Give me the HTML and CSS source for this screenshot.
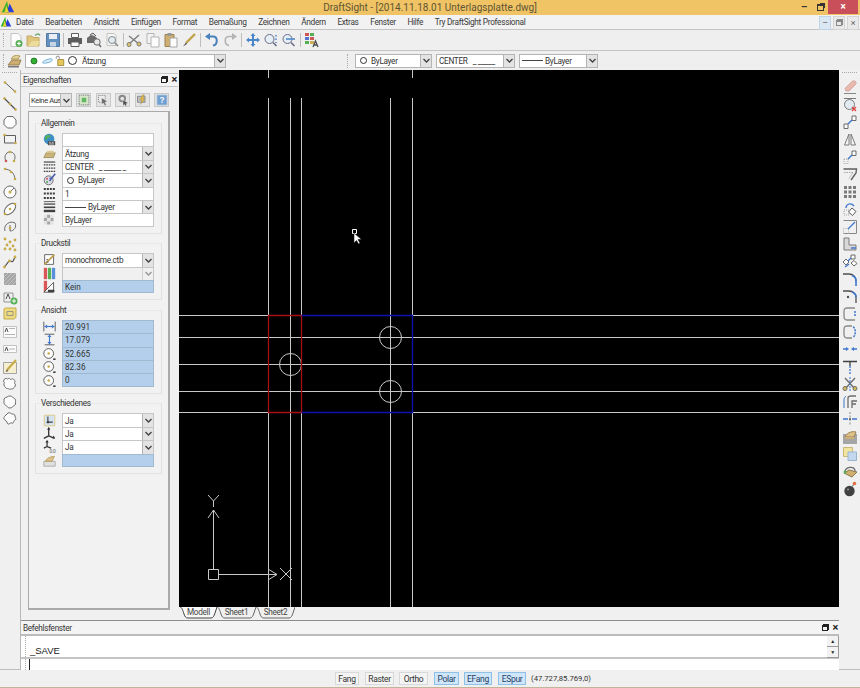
FILE: index.html
```html
<!DOCTYPE html>
<html lang="de">
<head>
  <meta charset="UTF-8">
  <title>DraftSight</title>
  <link rel="stylesheet" href="styles.css">
</head>
<body>
  <svg class="defs" xmlns="http://www.w3.org/2000/svg">
    <!-- small parts -->
    <symbol id="chev" viewBox="0 0 9 9"><path d="M1.5 3 4.5 6 7.5 3" fill="none" stroke="#444" stroke-width="1.4"/></symbol>
    <!-- main toolbar -->
    <symbol id="new" viewBox="0 0 16 16"><path d="M3 1.5h7l3 3v10H3z" fill="#fff" stroke="#bbb"/><circle cx="11" cy="11.5" r="3.5" fill="#3ca53c"/><path d="M11 9.5v4M9 11.5h4" stroke="#fff" stroke-width="1.2"/></symbol>
    <symbol id="open" viewBox="0 0 16 16"><path d="M1 4h5l1 1.5h6V14H1z" fill="#dcc06a" stroke="#b89c50"/><path d="M9 3.5c2-2 4-2 5 0" fill="none" stroke="#5aa25a" stroke-width="1.5"/><path d="M6 9h8l-2 5H2z" fill="#ecd98e"/></symbol>
    <symbol id="save" viewBox="0 0 16 16"><path d="M1.5 1.5h13v13h-13z" fill="#4a80b8" stroke="#3a6796"/><path d="M4 2h8v5H4z" fill="#e8eef5"/><path d="M5 10h6v4.5H5z" fill="#bcd0e4"/></symbol>
    <symbol id="print" viewBox="0 0 16 16"><path d="M4.5 1.5h7v4h-7z" fill="#fff" stroke="#444"/><path d="M1 6h14v6H1z" fill="#444"/><path d="M4 10h8v4.5H4z" fill="#fff" stroke="#444"/></symbol>
    <symbol id="plot" viewBox="0 0 16 16"><path d="M1 6l5-4 5 4v5H1z" fill="#555"/><path d="M4 3l3-2 3 3" fill="#ddd" stroke="#444"/><circle cx="11" cy="10" r="3.2" fill="#e8e8e8" stroke="#555"/><path d="M13 12.5l2 2.5" stroke="#555" stroke-width="1.5"/></symbol>
    <symbol id="preview" viewBox="0 0 16 16"><path d="M3 1.5h7l2 2v10H3z" fill="#f7f7f7" stroke="#bbb"/><circle cx="8" cy="8" r="3.5" fill="#e4ecf2" stroke="#777"/><path d="M10.5 10.5l3.5 3.5" stroke="#777" stroke-width="1.5"/></symbol>
    <symbol id="cut" viewBox="0 0 16 16"><path d="M2 13 13 3M3 4l10 8" stroke="#666" stroke-width="1.3"/><circle cx="3" cy="12.5" r="2" fill="#e0c050" stroke="#666"/><circle cx="13" cy="12" r="2" fill="#e0c050" stroke="#666"/></symbol>
    <symbol id="copy" viewBox="0 0 16 16"><path d="M2 1.5h7v10H2z" fill="#f4f4f4" stroke="#aaa"/><path d="M6 5h8v10H6z" fill="#fff" stroke="#aaa"/></symbol>
    <symbol id="paste" viewBox="0 0 16 16"><path d="M2 2.5h9v12H2z" fill="#c9a35c" stroke="#8b6f3a"/><path d="M4.5 1h4v3h-4z" fill="#888"/><path d="M7 6h7v9H7z" fill="#fff" stroke="#999"/></symbol>
    <symbol id="brush" viewBox="0 0 16 16"><path d="M14 2 5 11" stroke="#b8962e" stroke-width="2.4"/><path d="M5 10.5 2 14.5l4-2.5z" fill="#333"/></symbol>
    <symbol id="undo" viewBox="0 0 16 16"><path d="M4 4.5h5c5 0 5 8 0 9" fill="none" stroke="#2d6fb4" stroke-width="2"/><path d="M1 4.5 6 1v7z" fill="#2d6fb4"/></symbol>
    <symbol id="redo" viewBox="0 0 16 16"><path d="M12 4.5H7c-5 0-5 8 0 9" fill="none" stroke="#aaa" stroke-width="1.6"/><path d="M15 4.5 10 1v7z" fill="#aaa"/></symbol>
    <symbol id="pan" viewBox="0 0 16 16"><path d="M8 1 5.5 4h5zM8 15l-2.5-3h5zM1 8l3-2.5v5zM15 8l-3-2.5v5z" fill="#2d74c4"/><path d="M8 3v10M3 8h10" stroke="#2d74c4" stroke-width="2"/></symbol>
    <symbol id="zoom1" viewBox="0 0 16 16"><circle cx="6.5" cy="7" r="4.5" fill="#e4f0f8" stroke="#557"/><path d="M10 10.5l3.5 3.5" stroke="#557" stroke-width="1.6"/><path d="M13 3v1.5M13 6.5V8M13 10v1" stroke="#2d74c4" stroke-width="1.5"/></symbol>
    <symbol id="zoom2" viewBox="0 0 16 16"><circle cx="6.5" cy="7" r="4.5" fill="#e4f0f8" stroke="#557"/><path d="M10 10.5l3.5 3.5" stroke="#557" stroke-width="1.6"/><path d="M5 7h9" stroke="#2d74c4" stroke-width="1.5"/></symbol>
    <symbol id="layers" viewBox="0 0 16 16"><path d="M1 1h4v3H1z" fill="#c83c3c"/><path d="M6 1h4v3H6z" fill="#3ca53c"/><path d="M1 5h4v3H1z" fill="#3c5ec8"/><path d="M6 5h4v3H6z" fill="#c83c3c"/><path d="M1 9h4v3H1z" fill="#3ca53c"/><path d="M6 9h4v3H6z" fill="#c8a53c"/><path d="M9 15l2.5-6 2.5 6M10 13h3" fill="none" stroke="#333" stroke-width="1.3"/></symbol>
    <symbol id="layer" viewBox="0 0 16 16"><path d="M1 12 5 7h9l-2 5z" fill="#c9a35c" stroke="#8b6f3a"/><path d="M4 6c2-4 6-4 9-3l-2 3z" fill="#e2cc8a" stroke="#a58a3c"/><path d="M1 13h11v1.5H1z" fill="#666"/></symbol>
    <!-- draw tools -->
    <symbol id="d-line" viewBox="0 0 16 16"><path d="M2.5 3 13.5 13" stroke="#444"/><circle cx="3" cy="3.5" r="1.3" fill="#c2a02c"/><circle cx="13" cy="12.5" r="1.3" fill="#c2a02c"/></symbol>
    <symbol id="d-poly" viewBox="0 0 16 16"><path d="M2 2 8 8l6 6" stroke="#333" stroke-width="1.2"/><circle cx="2.5" cy="2.5" r="1.3" fill="#c2a02c"/><circle cx="8" cy="8" r="1.3" fill="#c2a02c"/><circle cx="13.5" cy="13.5" r="1.3" fill="#c2a02c"/></symbol>
    <symbol id="d-hex" viewBox="0 0 16 16"><path d="M5 2.5h6L14 6v4.5L10.5 14h-5L2 10.5V6z" fill="#fff" stroke="#555"/></symbol>
    <symbol id="d-rect" viewBox="0 0 16 16"><path d="M2.5 4.5h11v7.5h-11z" fill="#f4f4f4" stroke="#444"/><circle cx="2.5" cy="4" r="1.3" fill="#c2a02c"/><circle cx="13.5" cy="12" r="1.3" fill="#c2a02c"/></symbol>
    <symbol id="d-arc" viewBox="0 0 16 16"><path d="M4 12C1 7 5 2 9 3c4 1 5 5 3 9" fill="none" stroke="#555"/><circle cx="4" cy="12" r="1.3" fill="#c83c3c"/><circle cx="8" cy="3" r="1.3" fill="#c2a02c"/><circle cx="12" cy="12" r="1.3" fill="#c2a02c"/></symbol>
    <symbol id="d-arc2" viewBox="0 0 16 16"><path d="M2 3c6 0 11 4 11 11" fill="none" stroke="#555"/><circle cx="3" cy="3" r="1.3" fill="#c2a02c"/><circle cx="9" cy="6" r="1.3" fill="#c2a02c"/><circle cx="13" cy="13" r="1.3" fill="#c2a02c"/></symbol>
    <symbol id="d-circle" viewBox="0 0 16 16"><circle cx="8" cy="8" r="6" fill="#fff" stroke="#555"/><path d="M8 8l4-4" stroke="#555"/><circle cx="8" cy="8" r="1.5" fill="#c2a02c"/></symbol>
    <symbol id="d-ell" viewBox="0 0 16 16"><ellipse cx="8" cy="8" rx="7" ry="4" transform="rotate(-45 8 8)" fill="#fff" stroke="#555"/><circle cx="3" cy="13" r="1.3" fill="#c2a02c"/><circle cx="8" cy="8" r="1.3" fill="#c2a02c"/><circle cx="13" cy="3" r="1.3" fill="#c2a02c"/></symbol>
    <symbol id="d-ell2" viewBox="0 0 16 16"><path d="M3 12C1 6 8 1 13 4c2 4-1 8-5 8" fill="none" stroke="#555"/><path d="M8 6v6" stroke="#555"/><circle cx="8" cy="9" r="1.3" fill="#c2a02c"/></symbol>
    <symbol id="d-dots" viewBox="0 0 16 16"><g fill="#c2a02c"><circle cx="3" cy="3" r="1.4"/><circle cx="8" cy="6" r="1.4"/><circle cx="13" cy="4" r="1.4"/><circle cx="5" cy="9" r="1.4"/><circle cx="11" cy="10" r="1.4"/><circle cx="3" cy="13" r="1.4"/><circle cx="8" cy="13" r="1.4"/><circle cx="13" cy="14" r="1.4"/></g></symbol>
    <symbol id="d-spline" viewBox="0 0 16 16"><path d="M2 13c3-1 3-6 6-6s2 3 5-4" fill="none" stroke="#333" stroke-width="1.2"/><circle cx="2.5" cy="13" r="1.4" fill="#c2a02c"/><circle cx="7.5" cy="7" r="1.4" fill="#c2a02c"/><circle cx="13" cy="3" r="1.4" fill="#c2a02c"/></symbol>
    <symbol id="d-hatch" viewBox="0 0 16 16"><path d="M2 2h12v12H2z" fill="#9a9a9a"/><path d="M2 6 6 2M2 10l8-8M2 14 14 2M6 14l8-8M10 14l4-4" stroke="#c4c4c4" stroke-width=".8"/></symbol>
    <symbol id="d-block" viewBox="0 0 16 16"><path d="M2 4h9v9H2z" fill="#eee" stroke="#888"/><path d="M4 10l2-5 2 5" fill="none" stroke="#333"/><circle cx="12" cy="12" r="3.5" fill="#3ca53c"/><path d="M12 10v4M10 12h4" stroke="#fff"/></symbol>
    <symbol id="d-note" viewBox="0 0 16 16"><path d="M2 4c0-2 1-2 2-2h10v8c0 2-1 3-3 3H2z" fill="#efd86a" stroke="#b8a030"/><path d="M5 5.5h6v4H5z" fill="none" stroke="#887"/></symbol>
    <symbol id="d-text" viewBox="0 0 16 16"><path d="M1.5 2.5h13v11h-13z" fill="#fdfdfd" stroke="#bbb"/><path d="M3 8l1.5-4L6 8" fill="none" stroke="#333"/><path d="M7 4.5h6M3 10.5h10" stroke="#aaa"/></symbol>
    <symbol id="d-text2" viewBox="0 0 16 16"><path d="M1.5 4.5h13v7h-13z" fill="#fdfdfd" stroke="#bbb"/><path d="M3 10l1.5-4L6 10" fill="none" stroke="#333"/><path d="M7 8h6" stroke="#aaa"/></symbol>
    <symbol id="d-edit" viewBox="0 0 16 16"><path d="M1.5 3.5h13v11h-13z" fill="#f8f0cc" stroke="#999"/><path d="M14 1 5 11" stroke="#c2a02c" stroke-width="2.2"/><path d="M5 10.5 3.5 13l3-1z" fill="#333"/></symbol>
    <symbol id="d-cloud" viewBox="0 0 16 16"><path d="M3 3c1-1.5 2 0 2.5 0s1.5-1.5 2.5 0 2-1 3 0 2 1 2 2-1 2 0 3 0 3-1 3.5-1 2-2 1.5-2 1-3 0-2 0-3-1-1.5-1.5-2-3 1-2 0-3 0-3 1.5-3.5z" fill="#fff" stroke="#555"/></symbol>
    <symbol id="d-oct" viewBox="0 0 16 16"><path d="M8 2c2 0 2 1 3 1.5s2 1 2.5 2.5-.5 1.5 0 3-1 2.5-2 3-1.5 2-3.5 2-2-1-3.5-2-2-1.5-2.5-3 .5-1.5 0-3S3.5 3.5 5 3s1-1 3-1z" fill="#fff" stroke="#555"/></symbol>
    <symbol id="d-star" viewBox="0 0 16 16"><path d="M6 2c2-1 3 1 4 1s3 0 3 2 2 3 0 4-1 4-3 3-3 2-4 1-1-3-3-4-1-3 0-4 2-2 3-3z" fill="#fff" stroke="#555"/></symbol>
    <!-- modify tools -->
    <symbol id="m-erase" viewBox="0 0 16 16"><path d="M3 9.5 10 2.5c1-1 3-.5 3.5 0s1 2 0 3L7 12H4z" fill="#e8b0a4" stroke="#d09a90"/><path d="M2 14.5h12" stroke="#777"/></symbol>
    <symbol id="m-trim" viewBox="0 0 16 16"><path d="M2 2.5h12" stroke="#666"/><circle cx="7.5" cy="8.5" r="5" fill="#dfeaf2" stroke="#666"/><path d="M10 11l4 4M14 11l-4 4" stroke="#d22" stroke-width="1.3"/></symbol>
    <symbol id="m-copy" viewBox="0 0 16 16"><path d="M2 10h4v4.5H2zM10 2h4v4.5h-4z" fill="#fff" stroke="#555"/><path d="M6 10l4-4" stroke="#1f62c8" stroke-width="1.5"/></symbol>
    <symbol id="m-mirror" viewBox="0 0 16 16"><path d="M7 3 2.5 14H7zM9 3l4.5 11H9z" fill="#f6f6f6" stroke="#666"/></symbol>
    <symbol id="m-move" viewBox="0 0 16 16"><path d="M2 10h4v4.5H2z" fill="none" stroke="#999" stroke-dasharray="1 1"/><path d="M10 2h4v4.5h-4z" fill="#fff" stroke="#555"/><path d="M6 10l4-4" stroke="#1f62c8" stroke-width="1.5"/></symbol>
    <symbol id="m-offset" viewBox="0 0 16 16"><path d="M1.5 3h13l-.5 4-5 7" fill="none" stroke="#444" stroke-width="1.3"/><path d="M2 6.5h9l-4 6" fill="none" stroke="#999" stroke-dasharray="1.5 1"/></symbol>
    <symbol id="m-array" viewBox="0 0 16 16"><path fill="#666" d="M2 2h3v3H2zM6.5 2h3v3h-3zM11 2h3v3h-3zM2 6.5h3v3H2zM6.5 6.5h3v3h-3zM11 6.5h3v3h-3zM2 11h3v3H2zM6.5 11h3v3h-3zM11 11h3v3h-3z"/></symbol>
    <symbol id="m-rotate" viewBox="0 0 16 16"><path d="M2 9h5v5H2z" fill="none" stroke="#999" stroke-dasharray="1 1"/><path d="M10 7l4 3.5-3.5 4-4-3.5z" fill="#fff" stroke="#444"/><path d="M4 7c0-4 5-6 8-2" fill="none" stroke="#1f62c8" stroke-width="1.3"/></symbol>
    <symbol id="m-scale" viewBox="0 0 16 16"><path d="M1.5 1.5h13v13h-13" fill="none" stroke="#777"/><path d="M1.5 14.5V9.5h5v5" fill="none" stroke="#aaa" stroke-dasharray="1 1"/><path d="M6 10l7-7" stroke="#1f62c8" stroke-width="1.2"/></symbol>
    <symbol id="m-stretch" viewBox="0 0 16 16"><path d="M2 2h5v7h7v5H2z" fill="#d4d4d4" stroke="#666"/><path d="M9 12h5" stroke="#1f62c8" stroke-width="1.5"/></symbol>
    <symbol id="m-explode" viewBox="0 0 16 16"><path d="M9 1h4v4H9zM1 8l3-3 3 3-3 3zM9 9l3-2.5 3 3-3 2.5z" fill="#fff" stroke="#555"/><path d="M3 13l4-3M6 7l3-3" stroke="#1f62c8" stroke-width="1.3"/></symbol>
    <symbol id="m-fillet" viewBox="0 0 16 16"><path d="M1 3h6c4 0 7 3 7 7" fill="none" stroke="#333" stroke-width="1.4"/><path d="M10 4.5c3 1 4 3 4 5.5v5" fill="none" stroke="#1f62c8" stroke-width="1.6"/></symbol>
    <symbol id="m-fillet2" viewBox="0 0 16 16"><path d="M1 2h6c4 0 7 3 7 6v6" fill="none" stroke="#333" stroke-width="1.3"/><circle cx="6" cy="8" r="1.2" fill="#333"/><path d="M10 3c3 1 4 3 4 5" fill="none" stroke="#1f62c8" stroke-width="1.6"/></symbol>
    <symbol id="m-chamf" viewBox="0 0 16 16"><path d="M13 2H5C2 2 2 4 2 6v4c0 3 1 4 3 4h8" fill="none" stroke="#777" stroke-width="1.3"/><path d="M13 5v6" stroke="#1f62c8" stroke-width="1.5" stroke-dasharray="2 1"/></symbol>
    <symbol id="m-chamf2" viewBox="0 0 16 16"><path d="M10 2H5C2 2 2 4 2 6v4c0 3 1 4 3 4h5" fill="none" stroke="#777" stroke-width="1.3"/><path d="M11 3c3 1 3 9 0 10" fill="none" stroke="#1f62c8" stroke-width="1.5" stroke-dasharray="2 1"/></symbol>
    <symbol id="m-join" viewBox="0 0 16 16"><path d="M1 8h4M11 8h4" stroke="#1f62c8" stroke-width="1.3"/><path d="M4 6l3 2-3 2zM12 6 9 8l3 2z" fill="#1f62c8"/></symbol>
    <symbol id="m-ext" viewBox="0 0 16 16"><path d="M1 2.5h14" stroke="#222" stroke-width="1.5"/><path d="M8 3v4" stroke="#222" stroke-width="1.3"/><path d="M8 7v8" stroke="#1f62c8" stroke-width="1.3" stroke-dasharray="2 1"/></symbol>
    <symbol id="m-cut" viewBox="0 0 16 16"><path d="M3 2 13 13M13 2 3 13" stroke="#555" stroke-width="1.3"/><circle cx="3" cy="12.5" r="2" fill="#d3b23c" stroke="#555"/><circle cx="13" cy="12.5" r="2" fill="#d3b23c" stroke="#555"/><path d="M8 1v14" stroke="#1f62c8" stroke-dasharray="2 1"/></symbol>
    <symbol id="m-break" viewBox="0 0 16 16"><path d="M6 14V4c0-1 1-2 3-2h5M10 14V7h5M10 10h4" fill="none" stroke="#555" stroke-width="1.3"/><path d="M2 14V6c0-2 1-3 2-4" fill="none" stroke="#1f62c8"/></symbol>
    <symbol id="m-split" viewBox="0 0 16 16"><path d="M1 8h5M10 8h5" stroke="#1f62c8" stroke-width="1.3"/><path d="M8 1v14" stroke="#777" stroke-dasharray="2 1.5"/><circle cx="8" cy="8" r="1" fill="#333"/></symbol>
    <symbol id="m-hatch" viewBox="0 0 16 16"><path d="M1 5h14v10H1z" fill="#999"/><path d="M3 8c2-5 8-6 11-5l-2 5z" fill="#dcb878" stroke="#8b6f3a"/><path d="M3 8h9v2H3z" fill="#c9a35c"/></symbol>
    <symbol id="m-order" viewBox="0 0 16 16"><path d="M1.5 1.5h9v9h-9z" fill="#f2e294" stroke="#c2b060"/><path d="M6 6h8.5v8.5H6z" fill="#bcd4ee" stroke="#8ba9c8"/></symbol>
    <symbol id="m-group" viewBox="0 0 16 16"><path d="M3 8C2 3 13 1 13 7" fill="none" stroke="#555" stroke-width="1.3"/><path d="M2 9l5-3 8 2-5 5z" fill="#cba658" stroke="#7a6334"/><circle cx="3" cy="8" r="1.5" fill="#3ca53c"/></symbol>
    <symbol id="m-bomb" viewBox="0 0 16 16"><circle cx="7.5" cy="10" r="5.2" fill="#222"/><circle cx="6" cy="8.5" r="1" fill="#888"/><path d="M10 6l2-3" stroke="#777" stroke-width="1.3"/><circle cx="12.5" cy="2.5" r="1.8" fill="#e05a22"/></symbol>
    <!-- property panel -->
    <symbol id="p-filter" viewBox="0 0 16 16"><path d="M1.5 1.5h13v13h-13z" fill="#d6e8c8" stroke="#444" stroke-dasharray="1.5 1"/><path d="M5 5h6v6H5z" fill="#4cb04c"/></symbol>
    <symbol id="p-select" viewBox="0 0 16 16"><path d="M2 2h9v9H2z" fill="#eee" stroke="#666" stroke-dasharray="1.5 1"/><path d="M6 5l8 5-3.5 1 2 3.5-2 1-2-3.5-2 2z" fill="#555" stroke="#fff" stroke-width=".5"/></symbol>
    <symbol id="p-quick" viewBox="0 0 16 16"><circle cx="7" cy="6" r="5" fill="#777"/><circle cx="7" cy="6" r="2.5" fill="#e4e4e4"/><path d="M8 8l7 4-3 1 1 2-2 1-1-2-2 1.5z" fill="#333" stroke="#fff" stroke-width=".5"/></symbol>
    <symbol id="p-bolt" viewBox="0 0 16 16"><path d="M2 3h10v8H2z" fill="#bbb" stroke="#666"/><path d="M9 1 5 8h3l-2 6 6-8H9l2-5z" fill="#e5b51e" stroke="#8b6f3a" stroke-width=".5"/></symbol>
    <symbol id="p-help" viewBox="0 0 16 16"><path d="M1.5 1.5h13v13h-13z" fill="#5c93d0" stroke="#8fb3da"/><text x="8" y="12.5" font-size="11" font-weight="700" text-anchor="middle" fill="#fff" font-family="Liberation Sans, sans-serif">?</text></symbol>
    <symbol id="p-globe" viewBox="0 0 16 16"><circle cx="7.5" cy="7.5" r="6.5" fill="#1f7fbf"/><path d="M3 4c2-2 5-2 6-1s-1 3-3 3-1 3-2 3-2-3-1-5z" fill="#3ca53c"/><path d="M6 10h9v5H6z" fill="#333"/><path d="M7.5 11.5h2M11 11.5h2M7.5 13.5h6" stroke="#ddd"/></symbol>
    <symbol id="p-layer" viewBox="0 0 16 16"><path d="M1 13 4 7h11l-2 6z" fill="#c2ab64" stroke="#8b7a3e"/><path d="M4 7l1.5-2.5h7L15 7z" fill="#d8c684"/></symbol>
    <symbol id="p-ltype" viewBox="0 0 16 16"><path d="M1 2.5h14" stroke="#222" stroke-width="1.4"/><path d="M1 6h14M1 10h14M1 14h14" stroke="#222" stroke-width="1.6" stroke-dasharray="2 1"/></symbol>
    <symbol id="p-color" viewBox="0 0 16 16"><circle cx="7" cy="9" r="5.5" fill="#d8d8e8" stroke="#444"/><circle cx="5" cy="7" r="1.3" fill="#c83c3c"/><circle cx="9" cy="6.5" r="1.3" fill="#3c5ec8"/><circle cx="5" cy="11" r="1.3" fill="#3ca53c"/><path d="M15 1 8 10" stroke="#27409c" stroke-width="2"/></symbol>
    <symbol id="p-scale" viewBox="0 0 16 16"><path d="M1 2.5h14M1 8h14M1 13.5h14" stroke="#222" stroke-width="2.4" stroke-dasharray="2.5 1.2"/></symbol>
    <symbol id="p-weight" viewBox="0 0 16 16"><path d="M1 2h14" stroke="#222"/><path d="M1 5h14" stroke="#222" stroke-width="1.5"/><path d="M1 9h14" stroke="#222" stroke-width="2"/><path d="M1 13.5h14" stroke="#222" stroke-width="3"/></symbol>
    <symbol id="p-trans" viewBox="0 0 16 16"><path d="M5 1h4v4H5zM1 5h4v4H1zM9 5h4v4H9zM5 9h4v4H5z" fill="#999"/><path d="M1 1h4v4H1zM9 1h4v4H9zM5 5h4v4H5zM1 9h4v4H1zM9 9h4v4H9z" fill="#e2e2e2"/></symbol>
    <symbol id="p-style" viewBox="0 0 16 16"><path d="M2 2h11v12H2z" fill="#fff" stroke="#333"/><path d="M2 14 14 2" stroke="#b98f2e" stroke-width="2"/><path d="M4 11h3M4 8h2" stroke="#333"/></symbol>
    <symbol id="p-rgb" viewBox="0 0 16 16"><path d="M1 1h4v14H1z" fill="#d83c3c"/><path d="M6 1h4v14H6z" fill="#3ca53c"/><path d="M11 1h4v14h-4z" fill="#3c7ed8"/></symbol>
    <symbol id="p-tbl" viewBox="0 0 16 16"><path d="M1 1h4v14H1z" fill="#d83c3c"/><path d="M1 15 13 3v12z" fill="#fff" stroke="#222"/><path d="M6 12h8v3H6z" fill="#222"/></symbol>
    <symbol id="p-w" viewBox="0 0 16 16"><path d="M1 2v12M15 2v12" stroke="#222"/><path d="M2 8h12" stroke="#1f62c8" stroke-width="1.4"/><path d="M2 8l3-2.5v5zM14 8l-3-2.5v5z" fill="#1f62c8"/></symbol>
    <symbol id="p-h" viewBox="0 0 16 16"><path d="M2 1.5h12M2 14.5h12" stroke="#222"/><path d="M8 2v12" stroke="#1f62c8" stroke-width="1.4"/><path d="M8 2 5.5 5h5zM8 14l-2.5-3h5z" fill="#1f62c8"/></symbol>
    <symbol id="p-cx" viewBox="0 0 16 16"><circle cx="7" cy="8" r="6" fill="#fff" stroke="#444" stroke-width="1.2"/><circle cx="7" cy="8" r="1.6" fill="#c2a02c"/><path d="M12.5 15h3" stroke="#222" stroke-width="2"/></symbol>
    <symbol id="p-ucs" viewBox="0 0 16 16"><path d="M1.5 1.5h13v13h-13z" fill="#cfe0f2" stroke="#d8c060"/><path d="M6 3v7h6" fill="none" stroke="#222" stroke-width="1.4"/><circle cx="6" cy="10" r="1.5" fill="#222"/></symbol>
    <symbol id="p-axes" viewBox="0 0 16 16"><path d="M7 1v10l7 3M7 11l-6 3" fill="none" stroke="#111" stroke-width="1.6"/><path d="M7 0 5 3.5h4zM15 14l-3.5-.5 1.5-3z" fill="#111"/></symbol>
    <symbol id="p-orig" viewBox="0 0 16 16"><path d="M5 1v7l5 2M5 8 1 10" fill="none" stroke="#111" stroke-width="1.5"/><path d="M5 0 3 3h4z" fill="#111"/><text x="8" y="15.5" font-size="6" fill="#333" font-family="Liberation Sans, sans-serif">0,0</text></symbol>
    <symbol id="p-view" viewBox="0 0 16 16"><path d="M1 9h14v6H1z" fill="#ddd" stroke="#999"/><path d="M3 9c1-4 7-6 11-6l-3 6z" fill="#dcb878" stroke="#a58a3c"/></symbol>
    <symbol id="s-green" viewBox="0 0 16 16"><circle cx="8" cy="8" r="4" fill="#2fae2f" stroke="#116611"/></symbol>
    <symbol id="s-freeze" viewBox="0 0 16 16"><path d="M2 10c0-2 8-5 11-5s2 3 0 4-11 3-11 1z" fill="#d7ebf8" stroke="#69a8d2" stroke-width="1.2"/></symbol>
    <symbol id="s-lock" viewBox="0 0 16 16"><path d="M3 5V3c0-2 4-2 4 0v2" fill="none" stroke="#777" stroke-width="1.2"/><path d="M5 6h8v8H5z" fill="#e5c65a" stroke="#94792a"/></symbol>
  </svg>

  <div class="app">
    <div class="title">
      <svg class="logo" viewBox="0 0 16 16"><path d="M1 14 7 1l2 13z" fill="#2fae2f"/><path d="M6 14 10 4l5 10z" fill="#2b3fd6"/><path d="M4 14 6 6l3 8z" fill="#e8d52c"/></svg>
      <span class="title-text">DraftSight - [2014.11.18.01 Unterlagsplatte.dwg]</span>
      <div class="win-btns">
        <span class="win-btn">&#8211;</span>
        <span class="win-btn"><i class="restore"></i></span>
        <span class="win-btn close">&#215;</span>
      </div>
    </div>

    <div class="menu">
      <svg class="logo small" viewBox="0 0 16 16"><path d="M1 14 7 1l2 13z" fill="#2fae2f"/><path d="M6 14 10 4l5 10z" fill="#2b3fd6"/><path d="M4 14 6 6l3 8z" fill="#e8d52c"/></svg>
      <span>Datei</span><span>Bearbeiten</span><span>Ansicht</span><span>Einfügen</span><span>Format</span><span>Bemaßung</span><span>Zeichnen</span><span>Ändern</span><span>Extras</span><span>Fenster</span><span>Hilfe</span><span>Try DraftSight Professional</span>
      <div class="mdi-btns">
        <span class="mdi blue">&#8211;</span>
        <span class="mdi"><i class="restore tiny"></i></span>
        <span class="mdi">&#215;</span>
      </div>
    </div>

    <div class="tools">
      <i class="grip"></i>
      <svg class="ico"><use href="#new"/></svg><svg class="ico"><use href="#open"/></svg><svg class="ico"><use href="#save"/></svg>
      <i class="sep"></i>
      <svg class="ico"><use href="#print"/></svg><svg class="ico"><use href="#plot"/></svg><svg class="ico"><use href="#preview"/></svg>
      <i class="sep"></i>
      <svg class="ico"><use href="#cut"/></svg><svg class="ico"><use href="#copy"/></svg><svg class="ico"><use href="#paste"/></svg><svg class="ico"><use href="#brush"/></svg>
      <i class="sep"></i>
      <svg class="ico"><use href="#undo"/></svg><svg class="ico"><use href="#redo"/></svg>
      <i class="sep"></i>
      <svg class="ico"><use href="#pan"/></svg><svg class="ico"><use href="#zoom1"/></svg><svg class="ico"><use href="#zoom2"/></svg>
      <i class="sep"></i>
      <svg class="ico"><use href="#layers"/></svg>
    </div>

    <div class="tools second">
      <div class="left-tools">
        <i class="grip"></i>
        <svg class="ico"><use href="#layer"/></svg>
        <div class="combo layer-combo">
          <span class="val">
            <svg class="mini"><use href="#s-green"/></svg><svg class="mini"><use href="#s-freeze"/></svg><svg class="mini"><use href="#s-lock"/></svg><i class="ring"></i>
            <span class="layer-name">Ätzung</span>
          </span>
          <span class="arrow"><svg><use href="#chev"/></svg></span>
        </div>
      </div>
      <div class="right-tools">
        <i class="grip"></i>
        <div class="combo c-color"><span class="val"><i class="ring small-ring"></i>ByLayer</span><span class="arrow"><svg><use href="#chev"/></svg></span></div>
        <div class="combo c-ltype"><span class="val">CENTER&nbsp;&nbsp;&nbsp;_&nbsp;_____</span><span class="arrow"><svg><use href="#chev"/></svg></span></div>
        <div class="combo c-weight"><span class="val"><i class="lw"></i>ByLayer</span><span class="arrow"><svg><use href="#chev"/></svg></span></div>
      </div>
    </div>

    <div class="main">
      <div class="side-bar">
        <i class="bar-grip"></i>
        <svg class="ico"><use href="#d-line"/></svg>
        <svg class="ico"><use href="#d-poly"/></svg>
        <svg class="ico"><use href="#d-hex"/></svg>
        <svg class="ico"><use href="#d-rect"/></svg>
        <svg class="ico"><use href="#d-arc"/></svg>
        <svg class="ico"><use href="#d-arc2"/></svg>
        <svg class="ico"><use href="#d-circle"/></svg>
        <svg class="ico"><use href="#d-ell"/></svg>
        <svg class="ico"><use href="#d-ell2"/></svg>
        <svg class="ico"><use href="#d-dots"/></svg>
        <svg class="ico"><use href="#d-spline"/></svg>
        <svg class="ico"><use href="#d-hatch"/></svg>
        <svg class="ico"><use href="#d-block"/></svg>
        <svg class="ico"><use href="#d-note"/></svg>
        <svg class="ico"><use href="#d-text"/></svg>
        <svg class="ico"><use href="#d-text2"/></svg>
        <svg class="ico"><use href="#d-edit"/></svg>
        <svg class="ico"><use href="#d-cloud"/></svg>
        <svg class="ico"><use href="#d-oct"/></svg>
        <svg class="ico"><use href="#d-star"/></svg>
      </div>

      <div class="panel">
        <div class="dock-head">
          <span>Eigenschaften</span>
          <span class="dock-btns"><i class="restore tiny dark"></i><b>&#215;</b></span>
        </div>
        <div class="panel-tools">
          <div class="combo filter-combo"><span class="val">Keine Aus</span><span class="arrow"><svg><use href="#chev"/></svg></span></div>
          <span class="pbtn"><svg class="ico"><use href="#p-filter"/></svg></span>
          <span class="pbtn"><svg class="ico"><use href="#p-select"/></svg></span>
          <span class="pbtn"><svg class="ico"><use href="#p-quick"/></svg></span>
          <span class="pbtn"><svg class="ico"><use href="#p-bolt"/></svg></span>
          <span class="pbtn"><svg class="ico"><use href="#p-help"/></svg></span>
        </div>
        <div class="panel-frame">
          <section class="group">
            <h3>Allgemein</h3>
            <div class="row"><svg class="ico"><use href="#p-globe"/></svg><div class="field"></div></div>
            <div class="row"><svg class="ico"><use href="#p-layer"/></svg><div class="field drop">Ätzung<span class="arrow"><svg><use href="#chev"/></svg></span></div></div>
            <div class="row"><svg class="ico"><use href="#p-ltype"/></svg><div class="field drop">CENTER&nbsp;&nbsp;&nbsp;_&nbsp;_____&nbsp;_<span class="arrow"><svg><use href="#chev"/></svg></span></div></div>
            <div class="row"><svg class="ico"><use href="#p-color"/></svg><div class="field drop"><i class="ring small-ring"></i>ByLayer<span class="arrow"><svg><use href="#chev"/></svg></span></div></div>
            <div class="row"><svg class="ico"><use href="#p-scale"/></svg><div class="field">1</div></div>
            <div class="row"><svg class="ico"><use href="#p-weight"/></svg><div class="field drop"><i class="lw"></i>ByLayer<span class="arrow"><svg><use href="#chev"/></svg></span></div></div>
            <div class="row"><svg class="ico"><use href="#p-trans"/></svg><div class="field">ByLayer</div></div>
          </section>
          <section class="group">
            <h3>Druckstil</h3>
            <div class="row"><svg class="ico"><use href="#p-style"/></svg><div class="field drop">monochrome.ctb<span class="arrow"><svg><use href="#chev"/></svg></span></div></div>
            <div class="row"><svg class="ico"><use href="#p-rgb"/></svg><div class="field drop off"><span class="arrow"><svg><use href="#chev"/></svg></span></div></div>
            <div class="row"><svg class="ico"><use href="#p-tbl"/></svg><div class="field ro">Kein</div></div>
          </section>
          <section class="group">
            <h3>Ansicht</h3>
            <div class="row"><svg class="ico"><use href="#p-w"/></svg><div class="field ro">20.991</div></div>
            <div class="row"><svg class="ico"><use href="#p-h"/></svg><div class="field ro">17.079</div></div>
            <div class="row"><svg class="ico"><use href="#p-cx"/></svg><div class="field ro">52.665</div></div>
            <div class="row"><svg class="ico"><use href="#p-cx"/></svg><div class="field ro">82.36</div></div>
            <div class="row"><svg class="ico"><use href="#p-cx"/></svg><div class="field ro">0</div></div>
          </section>
          <section class="group">
            <h3>Verschiedenes</h3>
            <div class="row"><svg class="ico"><use href="#p-ucs"/></svg><div class="field drop">Ja<span class="arrow"><svg><use href="#chev"/></svg></span></div></div>
            <div class="row"><svg class="ico"><use href="#p-axes"/></svg><div class="field drop">Ja<span class="arrow"><svg><use href="#chev"/></svg></span></div></div>
            <div class="row"><svg class="ico"><use href="#p-orig"/></svg><div class="field drop">Ja<span class="arrow"><svg><use href="#chev"/></svg></span></div></div>
            <div class="row"><svg class="ico"><use href="#p-view"/></svg><div class="field ro"></div></div>
          </section>
        </div>
      </div>

      <div class="drawing">
        <svg class="canvas" viewBox="179 70 660 537" xmlns="http://www.w3.org/2000/svg">
          <g class="cad">
            <path d="M268.5 70v8M412.5 70v8"/>
            <path d="M268.5 98V607M290.5 98V607M301.5 98V607M390.5 98V607M412.5 98V607"/>
            <path d="M179 315.5H839M179 337.5H839M179 364.5H839M179 391.5H839M179 412.5H839"/>
            <circle cx="290.5" cy="364.5" r="11"/>
            <circle cx="390.5" cy="337.5" r="11"/>
            <circle cx="390.5" cy="391.5" r="11"/>
          </g>
          <path class="red" d="M301.5 315.5H268.5V412.5H301.5Z"/>
          <path class="blue" d="M301.5 315.5H412.5V412.5H301.5"/>
          <g class="ucs">
            <path d="M208.5 569.5h10v10h-10z"/>
            <path d="M213.5 569V510M208 518l5.5-8 5.5 8"/>
            <path d="M218.5 574.5H277M268 569l9 5.5-9 5.5"/>
            <path d="M280 568l12 12M292 568l-12 12"/>
            <path d="M208 495l5.5 6 5.5-6M213.5 501v6"/>
          </g>
          <path class="pick" d="M352.5 229.5h4v4h-4z"/>
          <path class="cursor" d="M354 233v10l2.5-2.5 2 3.5 1.5-1-2-3.5h3.5z"/>
        </svg>
        <div class="tabs">
          <div class="tab active"><svg width="37" height="12"><path d="M0 0c2 0 3 4 4 7s2 4 4 4h23c2 0 3-2 4-5l2-6"/></svg><span>Modell</span></div>
          <div class="tab"><svg width="39" height="12"><path d="M0 0c2 0 3 4 4 7s2 4 4 4h25c2 0 3-2 4-5l2-6"/></svg><span>Sheet1</span></div>
          <div class="tab"><svg width="39" height="12"><path d="M0 0c2 0 3 4 4 7s2 4 4 4h25c2 0 3-2 4-5l2-6"/></svg><span>Sheet2</span></div>
        </div>
      </div>

      <div class="side-bar right">
        <i class="bar-grip"></i>
        <svg class="ico"><use href="#m-erase"/></svg>
        <svg class="ico"><use href="#m-trim"/></svg>
        <svg class="ico"><use href="#m-copy"/></svg>
        <svg class="ico"><use href="#m-mirror"/></svg>
        <svg class="ico"><use href="#m-move"/></svg>
        <svg class="ico"><use href="#m-offset"/></svg>
        <svg class="ico"><use href="#m-array"/></svg>
        <svg class="ico"><use href="#m-rotate"/></svg>
        <svg class="ico"><use href="#m-scale"/></svg>
        <svg class="ico"><use href="#m-stretch"/></svg>
        <svg class="ico"><use href="#m-explode"/></svg>
        <svg class="ico"><use href="#m-fillet"/></svg>
        <svg class="ico"><use href="#m-fillet2"/></svg>
        <svg class="ico"><use href="#m-chamf"/></svg>
        <svg class="ico"><use href="#m-chamf2"/></svg>
        <svg class="ico"><use href="#m-join"/></svg>
        <svg class="ico"><use href="#m-ext"/></svg>
        <svg class="ico"><use href="#m-cut"/></svg>
        <svg class="ico"><use href="#m-break"/></svg>
        <svg class="ico"><use href="#m-split"/></svg>
        <svg class="ico"><use href="#m-hatch"/></svg>
        <svg class="ico"><use href="#m-order"/></svg>
        <svg class="ico"><use href="#m-group"/></svg>
        <svg class="ico"><use href="#m-bomb"/></svg>
      </div>

      <div class="command">
        <div class="dock-head cmd-head">
          <span>Befehlsfenster</span>
          <span class="dock-btns"><i class="restore tiny dark"></i><b>&#215;</b></span>
        </div>
        <div class="cmd-log">
          <i class="cmd-grip"></i>
          <span class="cmd-text">_SAVE</span>
          <div class="scroll"><span class="sb">&#9650;</span><span class="sb">&#9660;</span></div>
        </div>
        <div class="cmd-input"><i class="cmd-grip"></i><i class="caret"></i></div>
      </div>
    </div>

    <div class="status">
      <span class="sbtn w-fang">Fang</span>
      <span class="sbtn w-raster">Raster</span>
      <span class="sbtn w-ortho">Ortho</span>
      <span class="sbtn on w-polar">Polar</span>
      <span class="sbtn on w-efang">EFang</span>
      <span class="sbtn on w-espur">ESpur</span>
      <span class="coords">(47.727,85.769,0)</span>
    </div>
  </div>
</body>
</html>
```

FILE: styles.css
```css
/* Global */
body {
  margin: 0;
  background-color: #f0f0f0;
  font-family: Roboto, sans-serif;
  font-size: 8.2px;
  letter-spacing: -0.3px;
  color: #333;
}

.defs {
  display: none;
}

.app {
  display: flex;
  flex-direction: column;
  width: 860px;
  height: 688px;
  overflow: hidden;
}

.ico {
  display: block;
  flex: none;
  width: 16px;
  height: 16px;
  opacity: 0.85;
}

/* Title bar */
.title {
  position: relative;
  display: flex;
  align-items: center;
  justify-content: center;
  height: 15px;
  background-color: #f0c465;
}

.logo {
  position: absolute;
  left: 1px;
  top: 0;
  width: 14px;
  height: 14px;
}

.title-text {
  font-size: 10px;
  letter-spacing: 0;
  color: #5f5433;
}

.win-btns {
  position: absolute;
  right: 2px;
  top: 0;
  display: flex;
}

.win-btn {
  display: flex;
  align-items: center;
  justify-content: center;
  width: 16px;
  height: 14px;
  font-size: 10px;
  line-height: 14px;
  font-weight: 700;
  color: #333;
}

.win-btn.close {
  width: 30px;
  background-color: #c9505a;
  color: #fff;
}

.restore {
  display: block;
  width: 7px;
  height: 7px;
  border: 1px solid #333;
  border-top-width: 2px;
  box-sizing: border-box;
  box-shadow: 2px -2px 0 -1px #333;
}

.restore.tiny {
  width: 6px;
  height: 6px;
  border-color: #888;
  box-shadow: 1px -1px 0 0 #888;
}

.restore.dark {
  border-color: #222;
  box-shadow: 1px -1px 0 0 #222;
}

/* Menu */
.menu {
  position: relative;
  display: flex;
  align-items: center;
  gap: 11.6px;
  height: 14px;
  padding-left: 16px;
  background-color: #f2f2f2;
  border-bottom: 1px solid #c4c4c4;
  font-size: 8.3px;
  color: #3a3a3a;
}

.logo.small {
  left: 0;
  top: 1px;
  width: 12px;
  height: 12px;
}

.mdi-btns {
  position: absolute;
  right: 1px;
  top: 1px;
  display: flex;
  gap: 2px;
}

.mdi {
  display: flex;
  align-items: center;
  justify-content: center;
  width: 10px;
  height: 12px;
  border: 1px solid #d4d4d4;
  background-color: #e9e9e9;
  color: #666;
  font-size: 9px;
  line-height: 12px;
}

.mdi.blue {
  background-color: #dbe7f3;
  border-color: #bfd4e8;
}

/* Toolbars */
.tools {
  display: flex;
  align-items: center;
  gap: 2.4px;
  height: 20px;
  padding-left: 3px;
  background-color: #efefef;
  border-bottom: 1px solid #c4c4c4;
}

.grip {
  flex: none;
  height: 14px;
  margin-right: 1.6px;
  border-left: 1px dotted #aaa;
}

.sep {
  width: 1px;
  height: 14px;
  margin: 0 0.3px;
  background-color: #bdbdbd;
}

.tools.second {
  gap: 0;
  height: 19px;
  padding-left: 0;
  border-bottom: 0;
}

.left-tools {
  display: flex;
  align-items: center;
  gap: 2px;
  box-sizing: border-box;
  width: 347px;
  padding-left: 3px;
}

.left-tools .grip {
  margin-right: 1px;
}

.right-tools {
  display: flex;
  align-items: center;
  gap: 4px;
}

.right-tools .grip {
  margin-right: 3px;
}

.combo {
  display: flex;
  align-items: stretch;
  box-sizing: border-box;
  height: 14px;
  background-color: #fff;
  border: 1px solid #b4b4b4;
}

.combo .val {
  flex: 1;
  display: flex;
  align-items: center;
  padding-left: 2px;
  overflow: hidden;
  white-space: nowrap;
}

.arrow {
  display: flex;
  align-items: center;
  justify-content: center;
  flex: none;
  width: 10px;
  background-color: #e3e3e3;
  border-left: 1px solid #b4b4b4;
}

.arrow svg {
  width: 9px;
  height: 9px;
}

.layer-combo {
  width: 201px;
}

.mini {
  width: 12px;
  height: 12px;
  margin-right: 1px;
}

.ring {
  display: inline-block;
  flex: none;
  box-sizing: border-box;
  width: 9px;
  height: 9px;
  margin: 0 4px 0 1px;
  border: 1px solid #333;
  border-radius: 50%;
  background-color: #fff;
}

.small-ring {
  width: 7px;
  height: 7px;
  margin-left: 2px;
}

.lw {
  flex: none;
  width: 21px;
  height: 1px;
  margin-right: 2px;
  background-color: #444;
}

.layer-name {
  margin-left: 1px;
}

.c-color {
  width: 77px;
}

.c-ltype {
  width: 79px;
}

.c-weight {
  width: 79px;
}

/* Main area */
.main {
  flex: 1;
  display: grid;
  grid-template-columns: 21px 158px 660px 21px;
  grid-template-rows: 550px 50px;
}

.side-bar {
  grid-row: 1 / 3;
  display: flex;
  flex-direction: column;
  gap: 1.5px;
  align-items: center;
  box-sizing: border-box;
  padding-top: 2px;
  padding-right: 1px;
  border-right: 1px solid #b8b8b8;
  border-bottom: 1px solid #bdbdbd;
  background-color: #f0f0f0;
}

.side-bar.right {
  grid-column: 4;
  grid-row: 1 / 3;
  padding-right: 0;
  border-right: 0;
}

.bar-grip {
  flex: none;
  width: 15px;
  margin-bottom: 4px;
  border-top: 1px dotted #aaa;
}

/* Properties panel */
.panel {
  display: flex;
  flex-direction: column;
  box-sizing: border-box;
  padding-top: 3px;
}

.dock-head {
  display: flex;
  align-items: center;
  justify-content: space-between;
  height: 12px;
  padding: 0 1px 0 2px;
  margin-right: 1px;
  background-color: #f4f4f4;
  border: 1px solid #c8c8c8;
  border-width: 1px 0;
}

.dock-btns {
  display: flex;
  align-items: center;
  gap: 4px;
}

.dock-btns b {
  font-size: 11px;
  line-height: 10px;
  color: #222;
}

.panel-tools {
  display: flex;
  align-items: center;
  height: 14px;
  margin: 6px 0 0 8px;
}

.filter-combo {
  width: 43px;
  margin-right: 4px;
  font-size: 7.6px;
  letter-spacing: -0.4px;
}

.filter-combo .val {
  padding-left: 1px;
}

.pbtn {
  display: flex;
  align-items: center;
  justify-content: center;
  box-sizing: border-box;
  width: 15px;
  height: 14px;
  margin-right: 4.5px;
  background-color: #e4e4e4;
  border: 1px solid #c8c8c8;
}

.pbtn .ico {
  width: 12px;
  height: 12px;
}

.panel-frame {
  box-sizing: border-box;
  height: 499px;
  margin: 4px 9px 0 7px;
  padding: 11px 6px 0 6px;
  border: 1px solid #aaa;
  border-right-width: 2px;
  border-bottom-width: 2px;
  background-color: #f2f2f2;
}

.group {
  box-sizing: border-box;
  margin-bottom: 9.5px;
  padding: 0 7px 6px 7px;
  border: 1px solid #e2e2e2;
  border-top-color: #e8e8e8;
}

.group h3 {
  margin: -7px 0 4px -2px;
  height: 12px;
  font-size: 8.2px;
  font-weight: 400;
  line-height: 12px;
  color: #333;
}

.row {
  display: flex;
  align-items: center;
  height: 13.4px;
}

.row .ico {
  width: 13px;
  height: 13px;
  margin: 0 6px 0 0;
}

.field {
  display: flex;
  align-items: center;
  box-sizing: border-box;
  width: 94px;
  height: 13.4px;
  padding-left: 2px;
  background-color: #fff;
  border: 1px solid #c6c6c6;
  border-bottom-width: 0;
  white-space: nowrap;
  overflow: hidden;
}

.row:last-child .field {
  border-bottom-width: 1px;
}

.field.drop .arrow {
  align-self: stretch;
  margin-left: auto;
}

.field.off {
  background-color: #f0f0f0;
}

.field.off .arrow {
  background-color: #f0f0f0;
  opacity: 0.5;
}

.field.ro {
  background-color: #b4cfec;
  border-color: #a0b8d0;
  letter-spacing: 0;
}

/* Drawing area */
.drawing {
  display: flex;
  flex-direction: column;
}

.canvas {
  display: block;
  width: 660px;
  height: 537px;
  background-color: #000;
}

.cad path,
.cad circle,
.ucs path {
  fill: none;
  stroke: #c8c8c8;
  stroke-width: 1;
}

.red {
  fill: none;
  stroke: #a80f14;
  stroke-width: 1.3;
}

.blue {
  fill: none;
  stroke: #0c12b0;
  stroke-width: 1.3;
}

.pick {
  fill: #000;
  stroke: #fff;
}

.cursor {
  fill: #fff;
  stroke: #000;
  stroke-width: 0.5;
}

.tabs {
  display: flex;
  padding-left: 1px;
  height: 13px;
}

.tab {
  position: relative;
  display: flex;
  justify-content: center;
  width: 39px;
  height: 12px;
  line-height: 11px;
  color: #444;
}

.tab.active {
  width: 37px;
}

.tab svg {
  position: absolute;
  left: 0;
  top: 0;
}

.tab svg path {
  fill: none;
  stroke: #666;
}

.tab.active svg path {
  fill: #f8f8f8;
  stroke: #444;
}

.tab span {
  position: relative;
}

/* Command window */
.command {
  grid-column: 2 / 4;
  grid-row: 2;
  display: flex;
  flex-direction: column;
  box-sizing: border-box;
  height: 50px;
  border-top: 1px solid #8d8d8d;
}

.cmd-head {
  flex: none;
  margin: 0;
  height: 13px;
  border-top: 0;
  border-bottom: 2px solid #bcbcbc;
}

.cmd-log {
  position: relative;
  display: flex;
  align-items: flex-end;
  box-sizing: border-box;
  height: 24px;
  padding-left: 4px;
  background-color: #fff;
  border-bottom: 2px solid #c4c4c4;
}

.cmd-grip {
  align-self: stretch;
  margin-right: 4px;
  border-left: 1px dotted #aaa;
}

.cmd-text {
  font-family: "Liberation Sans", sans-serif;
  font-size: 9.5px;
  line-height: 13px;
  letter-spacing: 0;
  color: #222;
}

.scroll {
  position: absolute;
  right: 0;
  top: 0;
  display: flex;
  flex-direction: column;
}

.sb {
  display: flex;
  align-items: center;
  justify-content: center;
  box-sizing: border-box;
  width: 12px;
  height: 11px;
  font-size: 5px;
  color: #222;
  background-color: #f2f2f2;
  border-right: 1px solid #999;
  border-bottom: 1px solid #999;
}

.cmd-input {
  flex: 1;
  display: flex;
  padding-left: 4px;
  background-color: #fff;
}

.cmd-input .cmd-grip {
  margin-right: 3px;
}

.caret {
  display: block;
  width: 1px;
  height: 11px;
  background-color: #222;
}

/* Status bar */
.status {
  display: flex;
  align-items: center;
  height: 18px;
  padding-left: 335px;
  box-sizing: border-box;
  background-color: #f0f0f0;
  border-bottom: 1px solid #c0b49a;
  font-size: 8.5px;
}

.sbtn {
  display: flex;
  align-items: center;
  justify-content: center;
  box-sizing: border-box;
  height: 13px;
  margin-right: 6px;
  background-color: #f4f4f4;
  border: 1px solid #d8d8d8;
  color: #333;
}

.sbtn.on {
  background-color: #cfe5f8;
  border-color: #8fc0e8;
  color: #1f3f66;
}

.w-fang { width: 24px; }
.w-raster { width: 29px; margin-right: 5px; }
.w-ortho { width: 29px; }
.w-polar { width: 25px; margin-right: 5px; }
.w-efang { width: 28px; }
.w-espur { width: 28px; margin-right: 5px; }

.coords {
  font-size: 7.7px;
  letter-spacing: 0;
}
```
